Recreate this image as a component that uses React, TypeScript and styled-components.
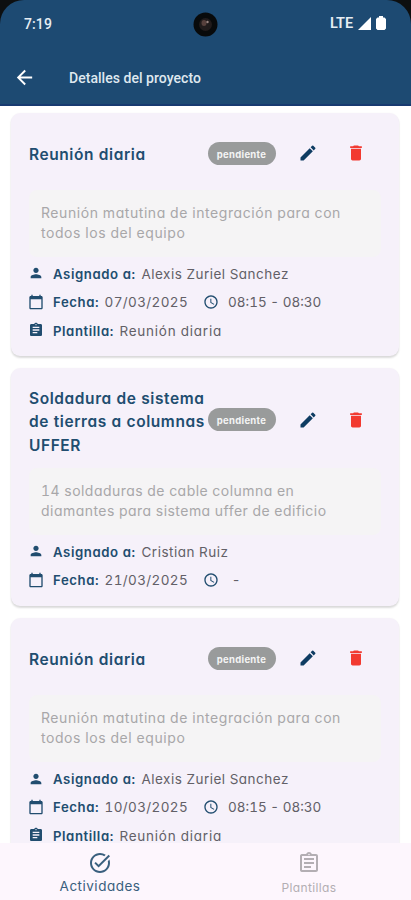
import React from 'react';
import styled, { createGlobalStyle } from 'styled-components';
import {
  MdAccessTime,
  MdArrowBack,
  MdAssignment,
  MdCalendarToday,
  MdDelete,
  MdEdit,
  MdOutlineAssignment,
  MdPerson,
  MdTaskAlt,
} from 'react-icons/md';

const navy = '#1d4a72';
const ink = '#214d6f';

const GlobalStyle = createGlobalStyle`
  * { box-sizing: border-box; }
  body {
    margin: 0;
    background: #fff;
    font-family: Inter, "Liberation Sans", sans-serif;
    font-feature-settings: "cv11" 1, "tnum" 1;
  }
`;

const Screen = styled.div`
  display: flex;
  flex-direction: column;
  width: 411px;
  height: 900px;
  overflow: hidden;
  background: #fff;
`;

const Top = styled.header`
  flex: none;
  height: 106px;
  background: #0d0f10;
  font-family: Roboto, sans-serif;
`;

const TopSurface = styled.div`
  height: 106px;
  background: ${navy};
  border-bottom: 2px solid #173a70;
  border-radius: 24px 24px 0 0;
`;

const StatusBar = styled.div`
  display: grid;
  grid-template-columns: 1fr 25px 1fr;
  align-items: center;
  height: 48px;
  padding: 0 25px 0 24px;
  color: #e6edf3;
`;

const Clock = styled.span`
  margin-top: -1px;
  font-size: 14px;
  font-weight: 500;
  letter-spacing: 0.1px;
`;

const Signals = styled.div`
  display: flex;
  align-items: center;
  justify-content: flex-end;
  margin-top: -2px;
  font-size: 14.5px;
  font-weight: 600;
  letter-spacing: -0.1px;

  svg { display: block; margin-left: 5px; }
`;

const AppBar = styled.div`
  display: flex;
  align-items: center;
  height: 58px;
  padding-left: 13px;
  color: #fff;
`;

const ScreenTitle = styled.h1`
  margin: 1px 0 0 33px;
  font-size: 14px;
  font-weight: 500;
  letter-spacing: 0.04px;
  color: #dfe8ef;
`;

const List = styled.main`
  flex: 1;
  min-height: 0;
  overflow: hidden;
  display: flex;
  flex-direction: column;
  gap: 12px;
  padding: 6.5px 12.5px 0 11px;
`;

const Card = styled.article`
  flex: none;
  padding: 17.5px 18px 11.2px;
  background: #f6f1fa;
  border-radius: 9px;
  box-shadow: 0 2px 2px rgba(0, 0, 0, 0.14), 0 0 2px rgba(0, 0, 0, 0.03);
`;

const CardHeader = styled.div`
  display: flex;
  align-items: center;
  min-height: 48px;
`;

const CardTitle = styled.h2`
  flex: none;
  width: 178.5px;
  margin: 0;
  padding-top: 1px;
  margin-bottom: -1px;
  font-size: 15.5px;
  line-height: 23.5px;
  font-weight: 600;
  letter-spacing: 0.58px;
  white-space: pre;
  color: ${ink};
`;

const Badge = styled.span`
  flex: none;
  width: 68px;
  height: 23px;
  margin-bottom: 2px;
  padding-top: 1px;
  border-radius: 12px;
  background: #999b9b;
  color: #f4f4f4;
  font-size: 9.5px;
  line-height: 23px;
  font-weight: 700;
  letter-spacing: 0.3px;
  text-align: center;
`;

const IconButton = styled.button<{ $color: string }>`
  display: flex;
  align-items: center;
  justify-content: center;
  width: 49px;
  height: 46px;
  margin-bottom: 2px;
  padding: 0;
  border: 0;
  background: none;
  color: ${(p) => p.$color};

  &:first-of-type { margin-left: 8px; }
`;

const Description = styled.p<{ $spacing: number }>`
  margin: 11.5px 0 3px;
  padding: 13px 12px;
  background: #f5f4f5;
  border-radius: 8px;
  color: #a8a7a9;
  font-size: 14px;
  line-height: 20.6px;
  letter-spacing: ${(p) => p.$spacing}px;
  white-space: pre;
`;

const InfoRow = styled.div`
  display: flex;
  align-items: center;
  height: 28.4px;
  color: #626067;
  font-size: 13.5px;
  white-space: pre;

  svg { flex: none; margin-bottom: 1px; color: ${ink}; }
  > svg { margin-left: -1px; }
`;

const Label = styled.strong<{ $width: number }>`
  flex: none;
  width: ${(p) => p.$width}px;
  margin-left: 9px;
  font-size: 13.2px;
  font-weight: 600;
  letter-spacing: 0.58px;
  color: ${ink};
`;

const Value = styled.span<{ $spacing?: number }>`
  letter-spacing: ${(p) => p.$spacing ?? 0.49}px;
`;

const Time = styled.span`
  display: flex;
  align-items: center;
  gap: 9px;
  margin-left: 15px;
`;

const BottomNav = styled.nav`
  flex: none;
  display: grid;
  grid-template-columns: 200px 1fr;
  height: 57px;
  background: #fdf6fd;
`;

const Tab = styled.a<{ $active?: boolean }>`
  display: flex;
  flex-direction: column;
  align-items: center;
  padding: 8px 0 0 ${(p) => (p.$active ? 0 : 7)}px;
  color: ${(p) => (p.$active ? '#3a5f7e' : '#b3aeb3')};
  font-size: ${(p) => (p.$active ? 13.5 : 12)}px;
  letter-spacing: ${(p) => (p.$active ? 0.5 : 0.35)}px;

  span { line-height: 18px; margin-top: ${(p) => (p.$active ? 2 : 4)}px; }
`;

interface Activity {
  title: string;
  description: string;
  spacing: number;
  assignee: string;
  date: string;
  time: string;
  template?: string;
}

const dailyText = 'Reunión matutina de integración para con\ntodos los del equipo';

const activities: Activity[] = [
  {
    title: 'Reunión diaria',
    description: dailyText,
    spacing: 0.56,
    assignee: 'Alexis Zuriel Sanchez',
    date: '07/03/2025',
    time: '08:15 - 08:30',
    template: 'Reunión diaria',
  },
  {
    title: 'Soldadura de sistema\nde tierras a columnas\nUFFER',
    description: '14 soldaduras de cable columna en\ndiamantes para sistema uffer de edificio',
    spacing: 0.46,
    assignee: 'Cristian Ruiz',
    date: '21/03/2025',
    time: ' -',
  },
  {
    title: 'Reunión diaria',
    description: dailyText,
    spacing: 0.56,
    assignee: 'Alexis Zuriel Sanchez',
    date: '10/03/2025',
    time: '08:15 - 08:30',
    template: 'Reunión diaria',
  },
];

function ActivityCard({ item }: { item: Activity }) {
  return (
    <Card>
      <CardHeader>
        <CardTitle>{item.title}</CardTitle>
        <Badge>pendiente</Badge>
        <IconButton $color="#0e3c62" aria-label="Editar"><MdEdit size={20} /></IconButton>
        <IconButton $color="#f23a30" aria-label="Eliminar"><MdDelete size={20} /></IconButton>
      </CardHeader>
      <Description $spacing={item.spacing}>{item.description}</Description>
      <InfoRow>
        <MdPerson size={16} />
        <Label $width={88.5}>Asignado a:</Label>
        <Value>{item.assignee}</Value>
      </InfoRow>
      <InfoRow>
        <MdCalendarToday size={16} />
        <Label $width={51.5}>Fecha:</Label>
        <Value $spacing={0.38}>{item.date}</Value>
        <Time>
          <MdAccessTime size={16} />
          <Value $spacing={0}>{item.time}</Value>
        </Time>
      </InfoRow>
      {item.template && (
        <InfoRow>
          <MdAssignment size={16} />
          <Label $width={66.5}>Plantilla:</Label>
          <Value $spacing={0.75}>{item.template}</Value>
        </InfoRow>
      )}
    </Card>
  );
}

function CameraLens() {
  return (
    <svg width="25" height="25" viewBox="0 0 25 25">
      <circle cx="12.5" cy="12.5" r="12" fill="#080a0b" />
      <circle cx="12.5" cy="12.5" r="6.5" fill="#211b1b" />
      <ellipse cx="11" cy="11" rx="2.5" ry="3" fill="#57403c" />
      <circle cx="14.5" cy="10" r="1.2" fill="#9b8580" />
    </svg>
  );
}

export default function App() {
  return (
    <>
      <GlobalStyle />
      <Screen>
        <Top>
          <TopSurface>
            <StatusBar>
              <Clock>7:19</Clock>
              <CameraLens />
              <Signals>
                LTE
                <svg width="13" height="13" viewBox="0 0 13 13"><path d="M13 0V13H0Z" fill="#fff" /></svg>
                <svg width="10" height="14" viewBox="0 0 10 14"><path d="M3 0h4v1.5h1.5L10 3v9.5L8.5 14h-7L0 12.5V3l1.500-1.500H3Z" fill="#fff" /></svg>
              </Signals>
            </StatusBar>
            <AppBar>
              <MdArrowBack size={23} />
              <ScreenTitle>Detalles del proyecto</ScreenTitle>
            </AppBar>
          </TopSurface>
        </Top>
        <List>
          {activities.map((item) => <ActivityCard key={item.date} item={item} />)}
        </List>
        <BottomNav>
          <Tab $active><MdTaskAlt size={24} /><span>Actividades</span></Tab>
          <Tab><MdOutlineAssignment size={24} /><span>Plantillas</span></Tab>
        </BottomNav>
      </Screen>
    </>
  );
}
